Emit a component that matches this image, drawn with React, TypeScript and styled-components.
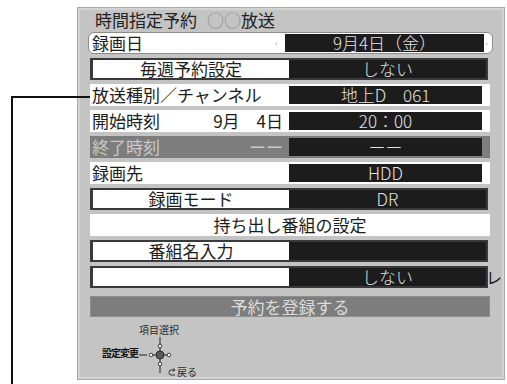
import React from "react";
import styled, { createGlobalStyle } from "styled-components";

const Global = createGlobalStyle`
  html, body { margin: 0; padding: 0; background: #fff; }
  body { font-family: "Noto Sans CJK JP", "Noto Sans", sans-serif; }
  * { box-sizing: border-box; }
`;

const Page = styled.div`
  position: relative;
  width: 507px;
  height: 384px;
  overflow: hidden;
  background: #fff;
  padding: 7px 0 0 77px;
`;

const Panel = styled.div`
  width: 428px;
  height: 373px;
  background: #c4c4c4;
  border: 1px solid #a9a9a9;
  box-shadow: inset 0 0 0 2px #d3d3d3;
  padding: 0 14px 0 12px;
  display: flex;
  flex-direction: column;
`;

const Title = styled.div`
  height: 25px;
  display: flex;
  align-items: center;
  gap: 10px;
  padding-left: 5px;
  font-size: 17px;
  line-height: 1;
  color: #222;
`;

const Faint = styled.span`
  color: #8a8a8a;
`;

const Rows = styled.div`
  display: flex;
  flex-direction: column;
  gap: 4px;
`;

const SelectedRow = styled.div`
  width: 405px;
  height: 22px;
  margin-left: -2px;
  background: #fff;
  border: 1px solid #8c8c8c;
  border-radius: 6px;
  display: flex;
  align-items: center;
  font-size: 17px;
  line-height: 1;
  color: #1c1c1c;
`;

const PlainRow = styled.div<{ $dim?: boolean }>`
  width: 400px;
  height: 22px;
  background: ${(p) => (p.$dim ? "#7d7d7d" : "#fff")};
  color: ${(p) => (p.$dim ? "#c9c9c9" : "#1c1c1c")};
  display: flex;
  align-items: center;
  font-size: 17px;
  line-height: 1;
  padding-right: 8px;
`;

const CenterRow = styled(PlainRow)`
  justify-content: center;
  padding-right: 0;
`;

const BoxRow = styled.div`
  width: 398px;
  height: 22px;
  border: 2px solid #3a3a3a;
  border-left-width: 3px;
  background: #1c1c1c;
  display: flex;
  align-items: stretch;
  font-size: 17px;
  line-height: 1;
`;

const Label = styled.div<{ $w: number; $pl?: number }>`
  flex: 0 0 ${(p) => p.$w}px;
  display: flex;
  align-items: center;
  justify-content: space-between;
  padding-left: ${(p) => p.$pl ?? 2}px;
  padding-right: 6px;
`;

const BoxLabel = styled.div`
  flex: 0 0 196px;
  background: #fff;
  color: #1c1c1c;
  display: flex;
  align-items: center;
  justify-content: center;
`;

const Value = styled.div<{ $w?: number }>`
  position: relative;
  ${(p) => (p.$w ? `flex: 0 0 ${p.$w}px;` : "flex: 1;")}
  height: 18px;
  background: #1c1c1c;
  color: #e2e2e2;
  font-weight: 300;
  display: flex;
  align-items: center;
  justify-content: center;
  font-size: 17px;
  line-height: 1;
`;

const BoxValue = styled(Value)`
  height: auto;
`;

const Arrow = styled.span`
  font-size: 8px;
  color: #8a8a8a;
  width: 5px;
  text-align: center;
  line-height: 1;
`;

const Overflow = styled.span`
  position: absolute;
  right: -16px;
  top: 1px;
  color: #1c1c1c;
  font-weight: 400;
  font-size: 16px;
`;

const Button = styled.div`
  width: 400px;
  height: 22px;
  margin-top: 8px;
  background: #7d7d7d;
  color: #dcdcdc;
  font-size: 17px;
  line-height: 1;
  display: flex;
  align-items: center;
  justify-content: center;
  box-shadow: inset 0 0 0 1px #8e8e8e;
`;

const Nav = styled.div`
  margin-top: 6px;
  display: grid;
  grid-template-columns: 48px 46px 60px;
  grid-template-rows: 14px 28px 14px;
  font-size: 10px;
  line-height: 1;
  color: #2a2a2a;
`;

const NavTop = styled.div`
  grid-column: 2;
  grid-row: 1;
  display: flex;
  align-items: center;
  justify-content: center;
  padding-right: 4px;
`;

const NavLeft = styled.div`
  grid-column: 1;
  grid-row: 2;
  display: flex;
  align-items: center;
  justify-content: flex-end;
  padding-top: 4px;
  font-weight: 700;
  color: #111;
  letter-spacing: -1px;
`;

const NavIcon = styled.svg`
  grid-column: 2;
  grid-row: 2 / 4;
`;

const NavBack = styled.div`
  grid-column: 2 / 4;
  grid-row: 3;
  display: flex;
  align-items: center;
  gap: 1px;
  padding-left: 30px;
`;

const Leader = styled.svg`
  position: absolute;
  left: 0;
  top: 0;
  pointer-events: none;
`;

export default function App() {
  return (
    <Page>
      <Global />
      <Panel>
        <Title>
          <span>時間指定予約</span>
          <span>
            <Faint>○○</Faint>放送
          </span>
        </Title>
        <Rows>
          <SelectedRow>
            <Label $w={196} $pl={3}>
              <span>録画日</span>
              <Arrow>‹</Arrow>
            </Label>
            <Value $w={199}>9月4日（金）</Value>
            <Arrow>›</Arrow>
          </SelectedRow>
          <BoxRow>
            <BoxLabel>毎週予約設定</BoxLabel>
            <BoxValue>しない</BoxValue>
          </BoxRow>
          <PlainRow>
            <Label $w={199}>放送種別／チャンネル</Label>
            <Value>地上D　061</Value>
          </PlainRow>
          <PlainRow>
            <Label $w={199}>
              <span>開始時刻</span>
              <span>9月　4日</span>
            </Label>
            <Value>20：00</Value>
          </PlainRow>
          <PlainRow $dim>
            <Label $w={199}>
              <span>終了時刻</span>
              <span>ーー</span>
            </Label>
            <Value>ーー</Value>
          </PlainRow>
          <PlainRow>
            <Label $w={199}>録画先</Label>
            <Value>HDD</Value>
          </PlainRow>
          <BoxRow>
            <BoxLabel>録画モード</BoxLabel>
            <BoxValue>DR</BoxValue>
          </BoxRow>
          <CenterRow>持ち出し番組の設定</CenterRow>
          <BoxRow>
            <BoxLabel>番組名入力</BoxLabel>
            <BoxValue />
          </BoxRow>
          <BoxRow>
            <BoxLabel />
            <BoxValue>
              しない
              <Overflow>レ</Overflow>
            </BoxValue>
          </BoxRow>
        </Rows>
        <Button>予約を登録する</Button>
        <Nav>
          <NavTop>項目選択</NavTop>
          <NavLeft>設定変更</NavLeft>
          <NavIcon width="46" height="42" viewBox="0 0 46 42">
            <line x1="22" y1="0" x2="22" y2="36" stroke="#3a3a3a" strokeWidth="1.2" />
            <line x1="1" y1="18" x2="9" y2="18" stroke="#3a3a3a" strokeWidth="1.2" />
            <line x1="12" y1="18" x2="32" y2="18" stroke="#3a3a3a" strokeWidth="1.2" />
            <circle cx="22" cy="18" r="4" fill="#5a5a5a" stroke="#2a2a2a" strokeWidth="1" />
            <circle cx="13" cy="18" r="1.8" fill="#fff" stroke="#333" strokeWidth="0.9" />
            <circle cx="31" cy="18" r="1.8" fill="#fff" stroke="#333" strokeWidth="0.9" />
            <circle cx="22" cy="9" r="1.8" fill="#fff" stroke="#333" strokeWidth="0.9" />
            <circle cx="22" cy="27" r="1.8" fill="#fff" stroke="#333" strokeWidth="0.9" />
          </NavIcon>
          <NavBack>
            <svg width="8" height="9" viewBox="0 0 8 9">
              <path d="M7 2 H3 Q1 2 1 4.5 Q1 7 3 7 H7" fill="none" stroke="#333" strokeWidth="1" />
              <path d="M5 0.5 L7 2 L5 3.5" fill="none" stroke="#333" strokeWidth="1" />
            </svg>
            戻る
          </NavBack>
        </Nav>
      </Panel>
      <Leader width="92" height="384" viewBox="0 0 92 384">
        <polyline points="12,384 12,97 90,97" fill="none" stroke="#111" strokeWidth="2" />
      </Leader>
    </Page>
  );
}
